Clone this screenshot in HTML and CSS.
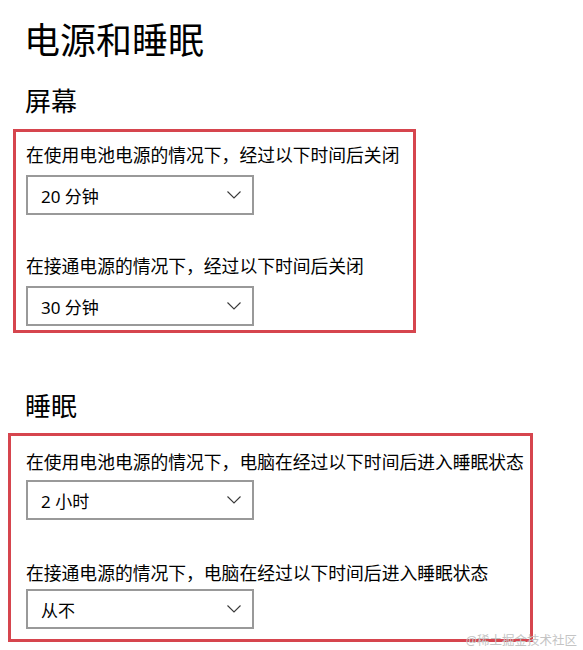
FILE: index.html
```html
<!DOCTYPE html>
<html lang="zh-CN">
<head>
    <meta charset="UTF-8">
    <meta name="viewport" content="width=device-width, initial-scale=1.0">
    <title>电源和睡眠</title>
    <link rel="stylesheet" href="styles.css">
</head>
<body>
    <h1 class="title">电源和睡眠</h1>

    <h2 class="section-title">屏幕</h2>
    <div class="group group-screen">
        <div class="setting-label">在使用电池电源的情况下，经过以下时间后关闭</div>
        <div class="select">
            <span>20 分钟</span>
            <svg class="chevron" width="14" height="8" viewBox="0 0 14 8"><polyline points="0.5,0.5 7,7 13.5,0.5" fill="none" stroke="#3a3a3a" stroke-width="1.1"/></svg>
        </div>

        <div class="setting-label second">在接通电源的情况下，经过以下时间后关闭</div>
        <div class="select">
            <span>30 分钟</span>
            <svg class="chevron" width="14" height="8" viewBox="0 0 14 8"><polyline points="0.5,0.5 7,7 13.5,0.5" fill="none" stroke="#3a3a3a" stroke-width="1.1"/></svg>
        </div>
    </div>

    <h2 class="section-title sleep">睡眠</h2>
    <div class="group group-sleep">
        <div class="setting-label">在使用电池电源的情况下，电脑在经过以下时间后进入睡眠状态</div>
        <div class="select">
            <span>2 小时</span>
            <svg class="chevron" width="14" height="8" viewBox="0 0 14 8"><polyline points="0.5,0.5 7,7 13.5,0.5" fill="none" stroke="#3a3a3a" stroke-width="1.1"/></svg>
        </div>

        <div class="setting-label second">在接通电源的情况下，电脑在经过以下时间后进入睡眠状态</div>
        <div class="select last">
            <span>从不</span>
            <svg class="chevron" width="14" height="8" viewBox="0 0 14 8"><polyline points="0.5,0.5 7,7 13.5,0.5" fill="none" stroke="#3a3a3a" stroke-width="1.1"/></svg>
        </div>
    </div>

    <div class="watermark">@稀土掘金技术社区</div>
</body>
</html>
```

FILE: styles.css
```css
body {
    margin: 0;
    position: relative;
    min-height: 650px;
    background-color: #ffffff;
    font-family: "Noto Sans", "Noto Sans CJK SC", sans-serif;
    color: #000000;
}

.title {
    margin: 23px 0 0 24px;
    font-size: 36px;
    line-height: 36px;
    font-weight: 400;
}

.section-title {
    margin: 29px 0 0 25px;
    font-size: 26px;
    line-height: 26px;
    font-weight: 400;
}

.section-title.sleep {
    margin-top: 60px;
}

.group {
    border: 3px solid #d6454e;
}

.group-screen {
    margin: 15px 0 0 13px;
    width: 387px;
    padding: 11px 0 4px 10px;
}

.group-sleep {
    margin: 14px 0 0 8px;
    width: 504px;
    padding: 14px 0 10px 15px;
}

.setting-label {
    font-size: 17.8px;
    line-height: 24px;
    white-space: nowrap;
}

.setting-label.second {
    margin-top: 39px;
}

.group-sleep .setting-label.second {
    margin-top: 41px;
}

.select {
    margin-top: 8px;
    width: 200px;
    height: 36px;
    border: 2px solid #999999;
    display: flex;
    align-items: center;
    justify-content: space-between;
    padding: 0 11px 0 13px;
    box-sizing: content-box;
    font-size: 17px;
}

.group-sleep .select {
    margin-top: 6px;
}

.group-sleep .select.last {
    margin-top: 4px;
}

.chevron {
    display: block;
}

.watermark {
    position: absolute;
    right: 6px;
    bottom: 1px;
    font-size: 12.5px;
    line-height: 16px;
    color: #c4c4c4;
}
```
